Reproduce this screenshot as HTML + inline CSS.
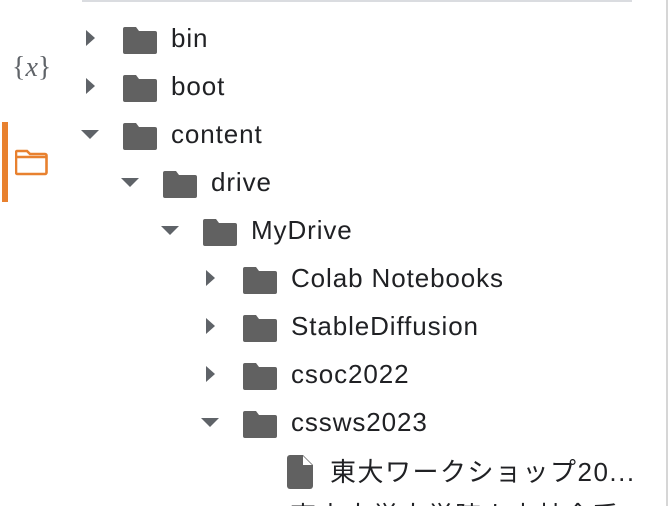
<!DOCTYPE html>
<html style="width:668px;height:506px;overflow:hidden"><head><meta charset="utf-8"><style>
body{margin:0;width:668px;height:506px;background:#fff;position:relative;overflow:hidden;font-family:"Liberation Sans","Noto Sans CJK JP",sans-serif;color:#202124}
.top{position:absolute;left:82px;top:0;width:550px;height:2px;background:#dadce0}
.rb{position:absolute;left:666px;top:0;width:2px;height:506px;background:#d6d6d6}
.bar{position:absolute;left:2px;top:122px;width:6px;height:80px;background:#e8812f}
.row{position:absolute;height:48px;display:flex;align-items:center;font-size:26px;letter-spacing:0.9px;white-space:nowrap}
.t{position:absolute}
</style></head><body>
<div class="top"></div><div class="rb"></div><div class="bar"></div>
<div style="position:absolute;left:12px;top:52px;font-family:'Liberation Serif',serif;font-size:28px;color:#5f6368"><span>{</span><i>x</i><span>}</span></div>
<svg style="position:absolute;left:15px;top:149px" width="33" height="27" viewBox="0 0 33 27"><path d="M2 2h10l3 3h15a1.5 1.5 0 0 1 1.5 1.5v17a1.5 1.5 0 0 1-1.5 1.5H2.5A1.5 1.5 0 0 1 1 23.5V3.5A1.5 1.5 0 0 1 2 2zM1.5 8h30" fill="none" stroke="#e8812f" stroke-width="2.6"/></svg>

<div id="tree"></div>
<script>
const rows=[["bin",0,"r"],["boot",0,"r"],["content",0,"d"],["drive",1,"d"],["MyDrive",2,"d"],["Colab Notebooks",3,"r"],["StableDiffusion",3,"r"],["csoc2022",3,"r"],["cssws2023",3,"d"],["東大ワークショップ20...",4,"f"]];
let h="";
rows.forEach((r,i)=>{
 const y=14+i*48, x=81+r[1]*40;
 let a="";
 if(r[2]=="r") a=`<svg class="t" style="left:${x+5}px;top:${y+16}px" width="10" height="16"><path d="M0 0L9 8L0 16z" fill="#5f6368"/></svg>`;
 if(r[2]=="d") a=`<svg class="t" style="left:${x}px;top:${y+20}px" width="18" height="10"><path d="M0 0H18L9 9z" fill="#5f6368"/></svg>`;
 let ic, tx;
 if(r[2]=="f"){ ic=`<svg class="t" style="left:287px;top:${y+9}px" width="26" height="34" viewBox="0 0 26 34"><path d="M3 0h13l10 10v21a3 3 0 0 1-3 3H3a3 3 0 0 1-3-3V3a3 3 0 0 1 3-3z" fill="#616161"/><path d="M16 1v9h9z" fill="#fff"/></svg>`; tx=330;}
 else { ic=`<svg class="t" style="left:${x+42}px;top:${y+13}px" width="34" height="27" viewBox="0 0 34 27"><path d="M2 0h11l3 4h16a2 2 0 0 1 2 2v19a2 2 0 0 1-2 2H2a2 2 0 0 1-2-2V2a2 2 0 0 1 2-2z" fill="#616161"/></svg>`; tx=x+90;}
 h+=a+ic+`<div class="row" style="left:${tx}px;top:${y}px${r[2]=="f"?";letter-spacing:1.5px":""}">${r[0]}</div>`;
});
document.getElementById("tree").innerHTML=h;
</script>
<div style="position:absolute;left:290px;top:494px;width:370px;height:12px;overflow:hidden">
<div class="row" style="left:0;top:-4px;letter-spacing:1.5px">東京大学大学院人文社会系</div>
</div>
</body></html>
